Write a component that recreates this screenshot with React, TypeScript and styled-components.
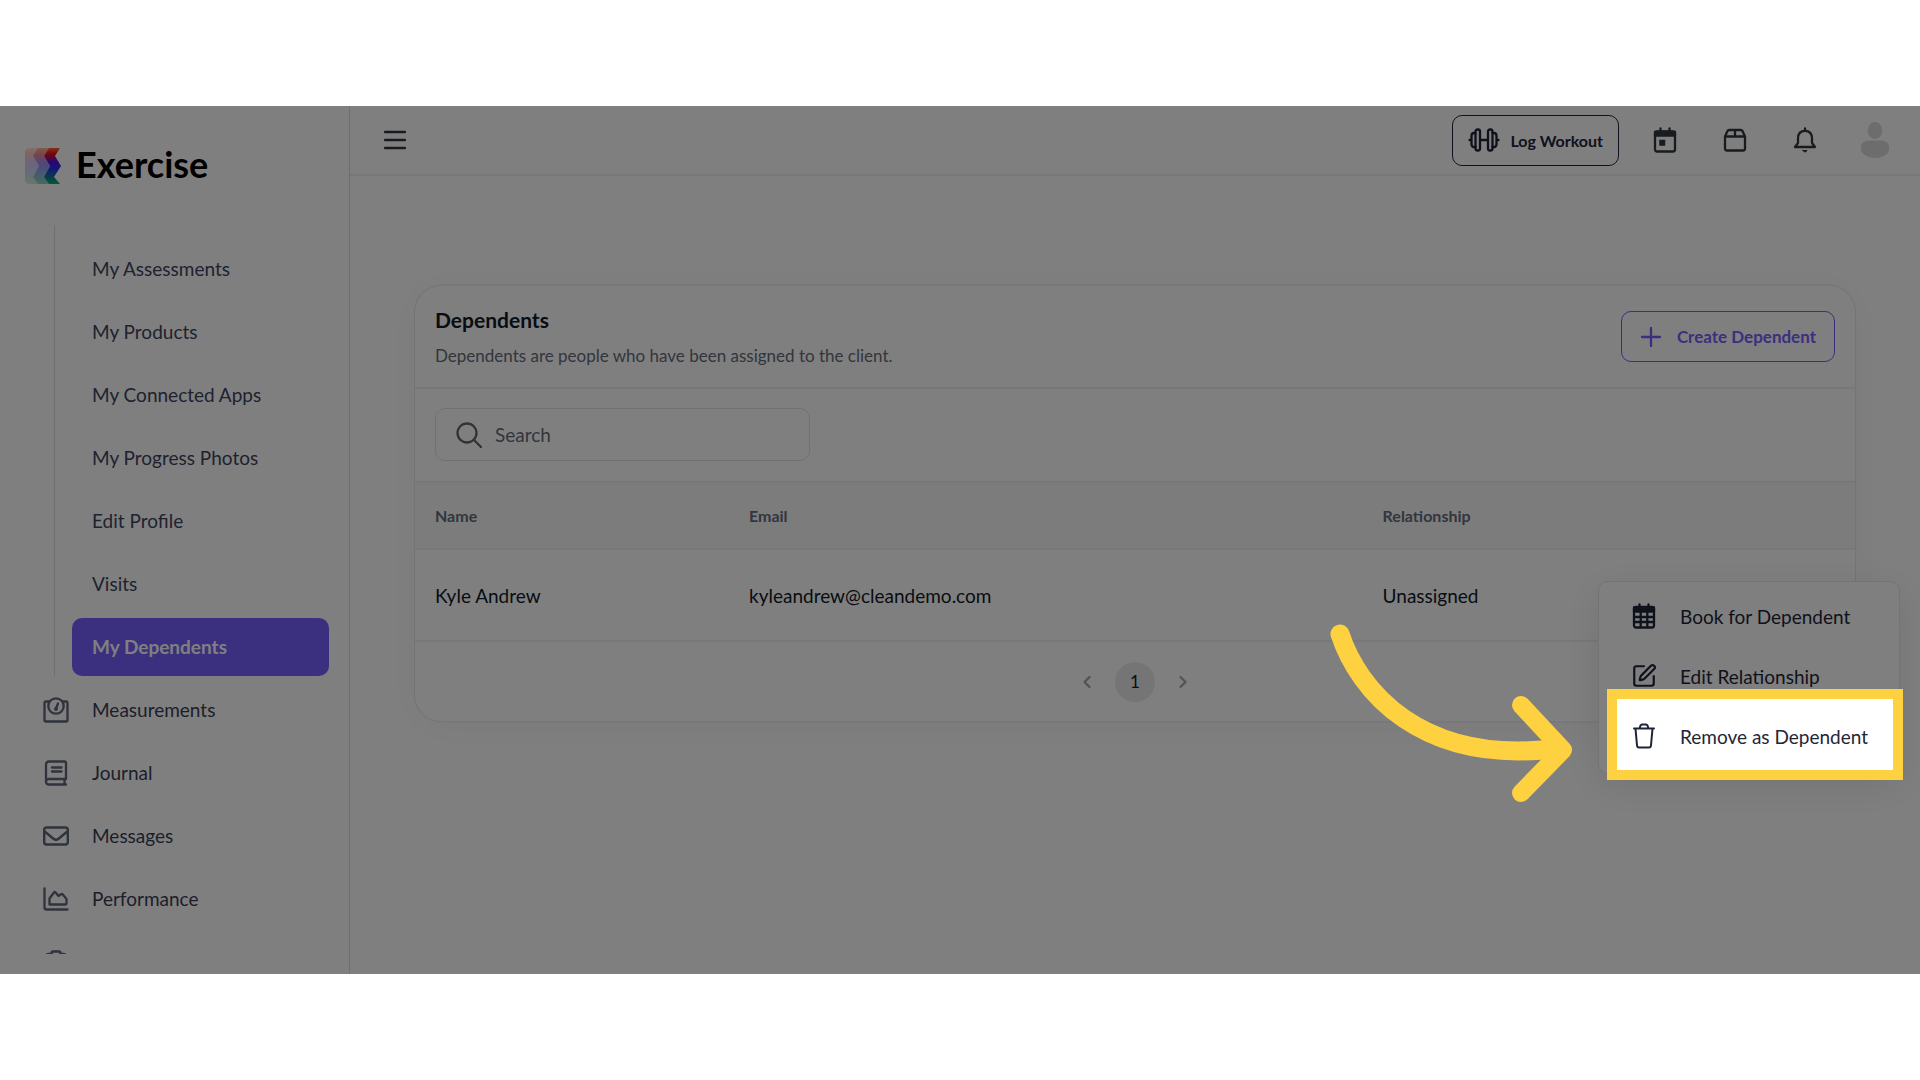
import React from "react";
import styled, { createGlobalStyle } from "styled-components";
import { FaRegEnvelope } from "react-icons/fa6";
import { SquarePen } from "lucide-react";

const GlobalStyle = createGlobalStyle`
  *, *::before, *::after { box-sizing: border-box; }
  body { margin: 0; background: #fff; font-family: Lato, "Liberation Sans", sans-serif; color: #111827; }
  button, input { font: inherit; color: inherit; }
  ul { list-style: none; margin: 0; padding: 0; }
  a { color: inherit; text-decoration: none; }
`;

const Stage = styled.div`
  height: 100vh;
  padding: 106px 0;
`;

const Shell = styled.div`
  position: relative;
  display: flex;
  height: 100%;
  overflow: hidden;
  background: #fff;
`;

/* ---------- Sidebar ---------- */

const Sidebar = styled.aside`
  flex: 0 0 350px;
  display: flex;
  flex-direction: column;
  padding-bottom: 20px;
  border-right: 1px solid #dedee2;
`;

const Brand = styled.a`
  flex: none;
  display: flex;
  align-items: center;
  gap: 15px;
  height: 119px;
  padding-left: 25px;
  color: #000;
  font-size: 36px;
  font-weight: 700;
`;

const Label = styled.span`
  padding-bottom: 2px;
`;

const BrandName = styled.span`
  padding-bottom: 4px;
`;

const Nav = styled.nav`
  flex: 1;
  min-height: 0;
  overflow: hidden;
`;

const SubList = styled.ul`
  margin-left: 54px;
  padding: 15px 20px 0 17px;
  border-left: 1px solid #dedee2;
`;

const SubLink = styled.a<{ $active?: boolean }>`
  display: flex;
  align-items: center;
  height: 58px;
  margin-bottom: 5px;
  padding: 0 20px;
  border-radius: 10px;
  font-size: 19px;
  font-weight: ${(p) => (p.$active ? 700 : 400)};
  color: ${(p) => (p.$active ? "#fff" : "#40455f")};
  background: ${(p) => (p.$active ? "#765efe" : "transparent")};
`;

const MainLink = styled.a`
  display: flex;
  align-items: center;
  gap: 23px;
  height: 58px;
  margin-bottom: 5px;
  padding-left: 43px;
  font-size: 19px;
  color: #393e56;

  svg {
    color: #5f6678;
  }
`;

/* ---------- Main column ---------- */

const Main = styled.div`
  flex: 1;
  min-width: 0;
`;

const TopBar = styled.header`
  display: flex;
  align-items: center;
  justify-content: space-between;
  height: 70px;
  padding: 0 21px 0 28px;
  border-bottom: 2px solid #eeeef0;
`;

const Actions = styled.div`
  display: flex;
  align-items: center;
  gap: 22px;
`;

const IconButton = styled.button<{ $width?: number }>`
  display: grid;
  place-items: center;
  width: ${(p) => p.$width ?? 48}px;
  height: 48px;
  padding: 0;
  border: 0;
  background: none;
  color: #30383c;
`;

const OutlineButton = styled.button<{ $tone: string; $gap: number; $size: number; $pad: number }>`
  display: flex;
  align-items: center;
  gap: ${(p) => p.$gap}px;
  height: 51px;
  padding: 0 ${(p) => p.$pad}px;
  border: 1px solid ${(p) => p.$tone};
  border-radius: 10px;
  background: none;
  color: ${(p) => p.$tone};
  font-size: ${(p) => p.$size}px;
  font-weight: 700;
`;

const Content = styled.main`
  padding: 108px 64px 0;
`;

const Card = styled.section`
  border: 1px solid #e8e8ec;
  border-top: 2px solid #f0f0f2;
  border-bottom: 2px solid #f0f0f2;
  border-radius: 28px;
  background: #fff;
  box-shadow: 0 4px 40px rgba(0, 0, 0, 0.04);
`;

const CardHeader = styled.div`
  display: flex;
  align-items: center;
  justify-content: space-between;
  height: 103px;
  padding: 0 20px;
  border-bottom: 2px solid #f0f0f2;
`;

const CardTitle = styled.h1`
  margin: 0 0 10px;
  font-size: 21px;
  line-height: 28px;
  font-weight: 700;
`;

const CardText = styled.p`
  margin: 0;
  font-size: 17px;
  line-height: 24px;
  color: #656c7b;
`;

const Toolbar = styled.div`
  padding: 19px 20px 20px;
`;

const SearchBox = styled.label`
  display: flex;
  align-items: center;
  gap: 13px;
  width: 375px;
  height: 53px;
  padding: 0 20px;
  border: 1px solid #e2e2e6;
  border-radius: 10px;
  color: #666;
`;

const SearchInput = styled.input`
  flex: 1;
  min-width: 0;
  padding: 0;
  border: 0;
  outline: 0;
  background: none;
  font-size: 19px;

  &::placeholder {
    color: #656c7b;
    opacity: 1;
  }
`;

const Table = styled.table`
  width: 100%;
  table-layout: fixed;
  border-spacing: 0;
  text-align: left;
`;

const NameCol = styled.col`
  width: 314px;
`;

const EmailCol = styled.col`
  width: 44%;
`;

const HeadCell = styled.th`
  height: 69px;
  padding: 0 20px;
  border-top: 2px solid #f0f0f1;
  border-bottom: 2px solid #f0f0f1;
  background: #f9f9f9;
  color: #656c7b;
  font-size: 16px;
  font-weight: 700;
`;

const Cell = styled.td`
  position: relative;
  height: 92px;
  padding: 0 20px;
  border-bottom: 2px solid #f0f0f2;
  font-size: 19px;
`;

const Pagination = styled.nav`
  display: flex;
  align-items: center;
  justify-content: center;
  gap: 16px;
  height: 79px;
`;

const PageButton = styled.button<{ $current?: boolean }>`
  display: grid;
  place-items: center;
  width: ${(p) => (p.$current ? 40 : 24)}px;
  height: 40px;
  padding: 0;
  border: 0;
  border-radius: 20px;
  background: ${(p) => (p.$current ? "#ebebeb" : "none")};
  color: ${(p) => (p.$current ? "#111827" : "#a6a6a6")};
  font-size: 17px;
`;

/* ---------- Row menu and guided-tour highlight ---------- */

const Menu = styled.ul`
  position: absolute;
  z-index: 10;
  top: 31px;
  right: -45px;
  width: 302px;
  padding: 4px 0 7px;
  border: 1px solid #e6e6e9;
  border-radius: 10px;
  background: #fff;
  box-shadow: 0 10px 40px rgba(0, 0, 0, 0.1);
`;

const MenuItem = styled.li`
  position: relative;
`;

const MenuButton = styled.button`
  display: flex;
  align-items: center;
  gap: 23px;
  width: 100%;
  height: 60px;
  padding: 0 32px;
  border: 0;
  background: none;
  color: #1f2538;
  font-size: 19px;
  text-align: left;
  white-space: nowrap;

  svg {
    flex: none;
  }
`;

const Spotlight = styled.div`
  position: absolute;
  inset: -17px -4px -14px 8px;
  border: 10px solid #fed141;
  box-shadow: 0 0 0 200vmax rgba(0, 0, 0, 0.5);
  pointer-events: none;
`;

const Pointer = styled.svg`
  position: absolute;
  top: -76px;
  right: calc(100% + 37px);
`;

/* ---------- Icons ---------- */

const Line = ({ size = 26, width = 2.3, box = 26, children }: { size?: number; width?: number; box?: number; children: React.ReactNode }) => (
  <svg width={size} height={size} viewBox={`0 0 ${box} ${box}`} fill="none" stroke="currentColor" strokeWidth={width} strokeLinecap="round" strokeLinejoin="round" aria-hidden="true">
    {children}
  </svg>
);

const LogoMark = () => (
  <svg width="36" height="36" viewBox="0 0 36 36" aria-hidden="true">
    <defs>
      <linearGradient id="spectrum" x1="0" y1="0" x2="0" y2="36" gradientUnits="userSpaceOnUse">
        <stop offset="0" stopColor="#ff6a30" />
        <stop offset="0.16" stopColor="#f00a10" />
        <stop offset="0.4" stopColor="#4a10e8" />
        <stop offset="0.55" stopColor="#2d28f0" />
        <stop offset="0.8" stopColor="#087a9a" />
        <stop offset="1" stopColor="#10b055" />
      </linearGradient>
    </defs>
    <path d="M5 0H13L8 8L14 18L8 29L13 36H5Q0 36 0 31V5Q0 0 5 0Z" fill="url(#spectrum)" opacity="0.22" />
    <path d="M13 0H24L19 8L25 18L19 29L24 36H13L8 29L14 18L8 8Z" fill="url(#spectrum)" opacity="0.48" />
    <path d="M24 0H35L30 8L36 18L29 29L35 36H24L19 29L25 18L19 8Z" fill="url(#spectrum)" />
  </svg>
);

const ScaleIcon = () => (
  <Line>
    <path d="M6 4.500H3Q1.500 4.500 1.500 6V23Q1.500 24.500 3 24.500H23Q24.500 24.500 24.500 23V6Q24.500 4.500 23 4.500H20" />
    <circle cx="13" cy="9" r="7.700" />
    <path d="M13 11.500L15 6.500" />
    <circle cx="13" cy="12" r="0.800" fill="currentColor" />
  </Line>
);

const JournalIcon = () => (
  <Line>
    <path d="M23 19V3Q23 1.500 21.500 1.500H6Q3 1.500 3 4.500V21.500Q3 24.500 6 24.500H23M23 19H6Q3 19 3 21.500M21.500 19V24.500M9 7.500H18.500M9 11.500H18.500" />
  </Line>
);

const AreaChartIcon = () => (
  <Line>
    <path d="M1.500 2.500V21.500Q1.500 23.500 3.500 23.500H24.500M6.500 18.500V12.500L11 6.500Q11.800 5.500 12.600 6.500L15.500 10L18 8.200Q19 7.500 19.800 8.500L23.500 13V17.500Q23.500 18.500 22.500 18.500Z" />
  </Line>
);

const ClipboardIcon = () => (
  <Line>
    <path d="M8.500 5H5.500Q3.500 5 3.500 7V22.500Q3.500 24.500 5.500 24.500H20.500Q22.500 24.500 22.500 22.500V7Q22.500 5 20.500 5H17.500" />
    <path d="M8.500 7V4Q8.500 2.500 10 2.500H16Q17.500 2.500 17.500 4V7Z" />
  </Line>
);

const MenuIcon = () => (
  <Line size={24} box={24}>
    <path d="M2 4H22M2 12H22M2 20H22" />
  </Line>
);

const DumbbellIcon = () => (
  <svg width="32" height="24" viewBox="0 0 32 24" fill="none" stroke="currentColor" strokeWidth="2.300" strokeLinecap="round" strokeLinejoin="round" aria-hidden="true">
    <rect x="7.500" y="1.500" width="4.500" height="21" rx="2" />
    <rect x="20" y="1.500" width="4.500" height="21" rx="2" />
    <path d="M7.500 5H6Q3.500 5 3.500 8V16Q3.500 19 6 19H7.500M24.500 5H26Q28.500 5 28.500 8V16Q28.500 19 26 19H24.500M1.500 12H3.500M12 12H20M28.500 12H30.500" />
  </svg>
);

const TodayIcon = () => (
  <Line>
    <rect x="3" y="4.500" width="20" height="20" rx="2" />
    <path d="M3 5H23V8.500H3Z" fill="currentColor" />
    <path d="M8.500 1.500V5M17.500 1.500V5" />
    <path d="M8 13.500H12.500V18H8Z" fill="currentColor" strokeWidth="1.500" strokeLinejoin="miter" />
  </Line>
);

const PackageIcon = () => (
  <Line>
    <path d="M3 9.500L5.500 4Q6 3 7.200 3H18.800Q20 3 20.500 4L23 9.500V21.500Q23 23.500 21 23.500H5Q3 23.500 3 21.500ZM3 9.500H23M13 3V9.500" />
  </Line>
);

const BellIcon = () => (
  <Line>
    <path d="M13 1.500V3.500M3 20H23L20 16V11.500Q20 3.800 13 3.800Q6 3.800 6 11.500V16Z" />
    <path d="M11 23.500H15Q14 25 13 25Q12 25 11 23.500Z" fill="currentColor" strokeWidth="1" />
  </Line>
);

const AvatarIcon = () => (
  <svg width="28" height="36" viewBox="0 0 28 36" fill="#dadada" aria-hidden="true">
    <ellipse cx="14" cy="8.500" rx="7.300" ry="8.500" />
    <path d="M0 26Q0 18.500 8 18.500H20Q28 18.500 28 26V29Q24 36 14 36Q4 36 0 29Z" />
  </svg>
);

const PlusIcon = () => (
  <Line size={22} box={22}>
    <path d="M11 2V20M2 11H20" />
  </Line>
);

const SearchIcon = () => (
  <Line>
    <circle cx="11" cy="11" r="9.500" />
    <path d="M18 18L25 25" />
  </Line>
);

const ChevronIcon = ({ next }: { next?: boolean }) => (
  <Line size={16} box={16}>
    <path d={next ? "M5.500 3L10.500 8L5.500 13" : "M10.500 3L5.500 8L10.500 13"} />
  </Line>
);

const CalendarIcon = () => (
  <Line>
    <rect x="3" y="4" width="20" height="20.500" rx="2" />
    <path d="M3 4.500H23V8.500H3Z" fill="currentColor" />
    <path d="M8.500 1.500V5M17.500 1.500V5M3 14H23M3 19H23M9.700 9V24M16.300 9V24" />
  </Line>
);

const TrashIcon = () => (
  <Line width={2}>
    <path d="M3 5.500H23M4.500 5.500L6 22.500Q6.200 24.500 8 24.500H18Q19.800 24.500 20 22.500L21.500 5.500M8.500 5.500L9.500 2.500Q10 1.500 11 1.500H15Q16 1.500 16.500 2.500L17.500 5.500" />
  </Line>
);

/* ---------- Data ---------- */

const subLinks = ["My Assessments", "My Products", "My Connected Apps", "My Progress Photos", "Edit Profile", "Visits", "My Dependents"];

const mainLinks = [
  { label: "Measurements", icon: <ScaleIcon /> },
  { label: "Journal", icon: <JournalIcon /> },
  { label: "Messages", icon: <FaRegEnvelope size={26} /> },
  { label: "Performance", icon: <AreaChartIcon /> },
];

export default function App() {
  return (
    <Stage>
      <GlobalStyle />
      <Shell>
        <Sidebar>
          <Brand href="#">
            <LogoMark />
            <BrandName>Exercise</BrandName>
          </Brand>
          <Nav>
            <SubList>
              {subLinks.map((label) => (
                <li key={label}>
                  <SubLink href="#" $active={label === "My Dependents"}>
                    <Label>{label}</Label>
                  </SubLink>
                </li>
              ))}
            </SubList>
            <ul>
              {mainLinks.map(({ label, icon }) => (
                <li key={label}>
                  <MainLink href="#">
                    {icon}
                    <Label>{label}</Label>
                  </MainLink>
                </li>
              ))}
              <li>
                <MainLink href="#" aria-label="Services"><ClipboardIcon /></MainLink>
              </li>
            </ul>
          </Nav>
        </Sidebar>

        <Main>
          <TopBar>
            <IconButton $width={34} aria-label="Toggle navigation"><MenuIcon /></IconButton>
            <Actions>
              <OutlineButton $tone="#1f2538" $gap={10} $size={16} $pad={15}>
                <DumbbellIcon />
                Log Workout
              </OutlineButton>
              <IconButton aria-label="Calendar"><TodayIcon /></IconButton>
              <IconButton aria-label="Packages"><PackageIcon /></IconButton>
              <IconButton aria-label="Notifications"><BellIcon /></IconButton>
              <IconButton aria-label="Account"><AvatarIcon /></IconButton>
            </Actions>
          </TopBar>

          <Content>
            <Card>
              <CardHeader>
                <div>
                  <CardTitle>Dependents</CardTitle>
                  <CardText>Dependents are people who have been assigned to the client.</CardText>
                </div>
                <OutlineButton $tone="#765efe" $gap={15} $size={17} $pad={18}>
                  <PlusIcon />
                  Create Dependent
                </OutlineButton>
              </CardHeader>

              <Toolbar>
                <SearchBox>
                  <SearchIcon />
                  <SearchInput type="search" placeholder="Search" aria-label="Search" />
                </SearchBox>
              </Toolbar>

              <Table>
                <colgroup>
                  <NameCol />
                  <EmailCol />
                  <col />
                  <col />
                </colgroup>
                <thead>
                  <tr>
                    <HeadCell scope="col">Name</HeadCell>
                    <HeadCell scope="col">Email</HeadCell>
                    <HeadCell scope="col">Relationship</HeadCell>
                    <HeadCell scope="col" aria-label="Actions" />
                  </tr>
                </thead>
                <tbody>
                  <tr>
                    <Cell>Kyle Andrew</Cell>
                    <Cell>kyleandrew@cleandemo.com</Cell>
                    <Cell>Unassigned</Cell>
                    <Cell>
                      <Menu>
                        <MenuItem>
                          <MenuButton><CalendarIcon />Book for Dependent</MenuButton>
                        </MenuItem>
                        <MenuItem>
                          <MenuButton><SquarePen size={26} />Edit Relationship</MenuButton>
                        </MenuItem>
                        <MenuItem>
                          <MenuButton><TrashIcon />Remove as Dependent</MenuButton>
                          <Spotlight>
                            <Pointer width="250" height="184" viewBox="0 0 250 184" fill="none" stroke="#fed141" strokeWidth="18" strokeLinecap="round" strokeLinejoin="round" aria-hidden="true">
                              <path d="M10 11C28 66 90 144 230 125" strokeWidth="19" />
                              <path d="M191 82L233 127L191 170" />
                            </Pointer>
                          </Spotlight>
                        </MenuItem>
                      </Menu>
                    </Cell>
                  </tr>
                </tbody>
              </Table>

              <Pagination aria-label="Pages">
                <PageButton aria-label="Previous page"><ChevronIcon /></PageButton>
                <PageButton $current>1</PageButton>
                <PageButton aria-label="Next page"><ChevronIcon next /></PageButton>
              </Pagination>
            </Card>
          </Content>
        </Main>
      </Shell>
    </Stage>
  );
}
